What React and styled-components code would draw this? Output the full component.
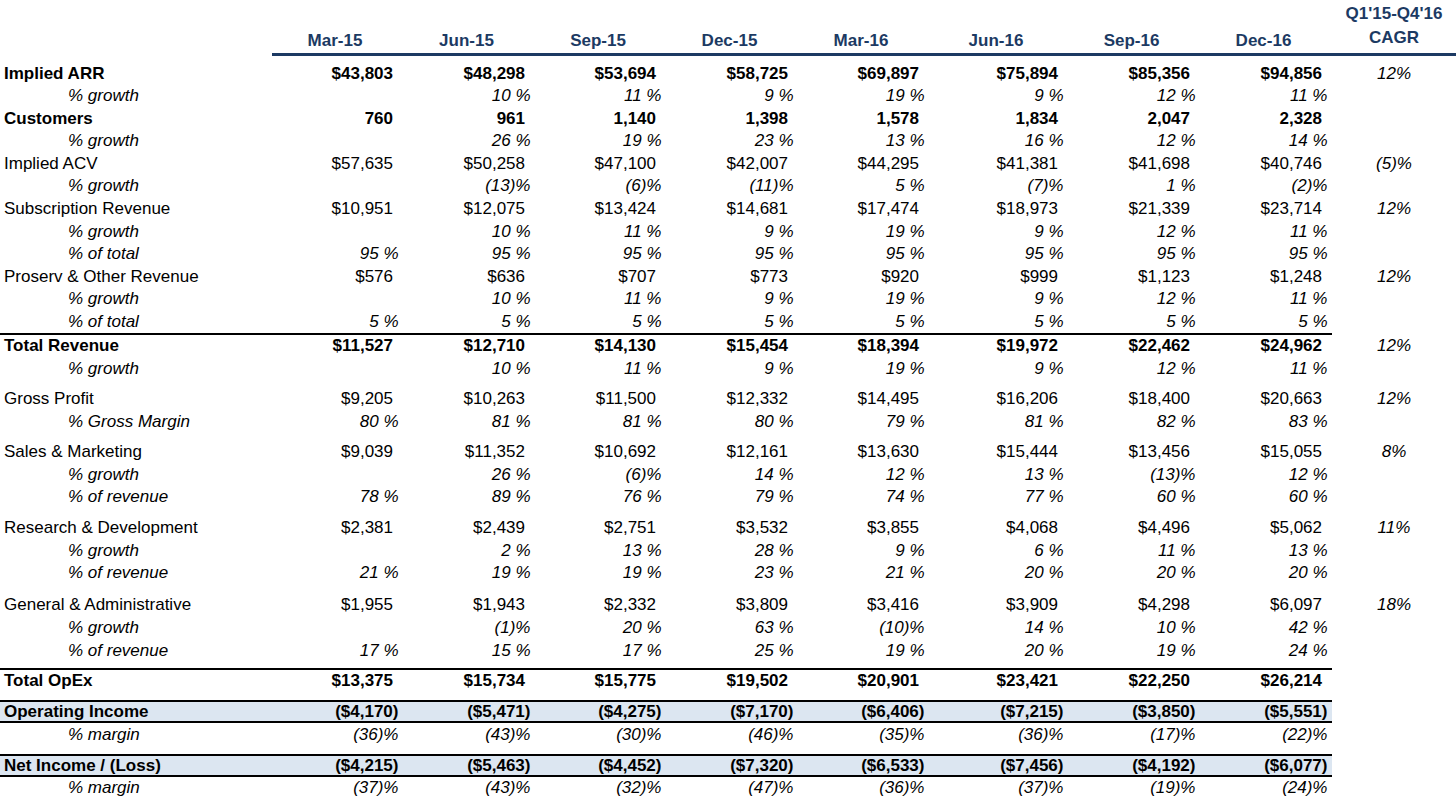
import React from 'react';
import styled, { createGlobalStyle } from 'styled-components';

const GlobalStyle = createGlobalStyle`
  body {
    margin: 0;
    background: #fff;
    font-family: "Liberation Sans", Arial, sans-serif;
    color: #000;
  }
`;

const COLS = '272px 131px 132px 131px 132px 131px 139px 132px 132px';
const NAVY = '#1c3a63';

const Sheet = styled.div`
  width: 1456px;
  font-size: 17px;
`;

const HeaderRow = styled.div`
  display: flex;
  height: 56px;
  margin-bottom: 6.7px;
`;

const HeaderBand = styled.div`
  margin-left: 272px;
  flex: 1;
  display: grid;
  grid-template-columns: 131px 132px 131px 132px 131px 139px 132px 132px 124px;
  align-items: end;
  border-bottom: 3px solid ${NAVY};
`;

const HeadCell = styled.div`
  color: ${NAVY};
  font-weight: bold;
  text-align: center;
  line-height: 24px;
  padding-right: ${(p) => (p.$cagr ? '0' : '5px')};
  position: relative;
  top: ${(p) => (p.$cagr ? '-3px' : '0')};
`;

const Row = styled.div`
  display: flex;
  margin-top: ${(p) => p.$gap || 0}px;
`;

const Main = styled.div`
  width: 1332px;
  display: grid;
  grid-template-columns: ${COLS};
  height: ${(p) => (p.$shaded ? '19px' : '22.55px')};
  line-height: ${(p) => (p.$shaded ? '19px' : '22.55px')};
  background: ${(p) => (p.$shaded ? '#dce6f1' : 'transparent')};
  border-top: ${(p) => (p.$line ? '2px solid #000' : 'none')};
  border-bottom: ${(p) => (p.$shaded ? '2px solid #000' : 'none')};
  font-weight: ${(p) => (p.$bold ? 'bold' : 'normal')};
  font-style: ${(p) => (p.$pct ? 'italic' : 'normal')};
  white-space: nowrap;
`;

const Label = styled.div`
  padding-left: ${(p) => (p.$indent ? '68px' : '4px')};
`;

const Value = styled.div`
  text-align: right;
  padding-right: ${(p) => p.$pad}px;
`;

const Cagr = styled.div`
  width: 124px;
  text-align: center;
  font-style: italic;
  line-height: 22.55px;
  padding-top: ${(p) => (p.$line ? '2px' : '0')};
`;

const rows = [
  { label: 'Implied ARR', type: 'bold', vals: ['$43,803', '$48,298', '$53,694', '$58,725', '$69,897', '$75,894', '$85,356', '$94,856'], cagr: '12%' },
  { label: '% growth', type: 'pct', vals: ['', '10 %', '11 %', '9 %', '19 %', '9 %', '12 %', '11 %'] },
  { label: 'Customers', type: 'bold', vals: ['760', '961', '1,140', '1,398', '1,578', '1,834', '2,047', '2,328'] },
  { label: '% growth', type: 'pct', vals: ['', '26 %', '19 %', '23 %', '13 %', '16 %', '12 %', '14 %'] },
  { label: 'Implied ACV', type: 'plain', vals: ['$57,635', '$50,258', '$47,100', '$42,007', '$44,295', '$41,381', '$41,698', '$40,746'], cagr: '(5)%' },
  { label: '% growth', type: 'pct', vals: ['', '(13)%', '(6)%', '(11)%', '5 %', '(7)%', '1 %', '(2)%'] },
  { label: 'Subscription Revenue', type: 'plain', vals: ['$10,951', '$12,075', '$13,424', '$14,681', '$17,474', '$18,973', '$21,339', '$23,714'], cagr: '12%' },
  { label: '% growth', type: 'pct', vals: ['', '10 %', '11 %', '9 %', '19 %', '9 %', '12 %', '11 %'] },
  { label: '% of total', type: 'pct', vals: ['95 %', '95 %', '95 %', '95 %', '95 %', '95 %', '95 %', '95 %'] },
  { label: 'Proserv & Other Revenue', type: 'plain', vals: ['$576', '$636', '$707', '$773', '$920', '$999', '$1,123', '$1,248'], cagr: '12%' },
  { label: '% growth', type: 'pct', vals: ['', '10 %', '11 %', '9 %', '19 %', '9 %', '12 %', '11 %'] },
  { label: '% of total', type: 'pct', vals: ['5 %', '5 %', '5 %', '5 %', '5 %', '5 %', '5 %', '5 %'] },
  { label: 'Total Revenue', type: 'bold', line: true, vals: ['$11,527', '$12,710', '$14,130', '$15,454', '$18,394', '$19,972', '$22,462', '$24,962'], cagr: '12%' },
  { label: '% growth', type: 'pct', vals: ['', '10 %', '11 %', '9 %', '19 %', '9 %', '12 %', '11 %'] },
  { label: 'Gross Profit', type: 'plain', gap: 7.7, vals: ['$9,205', '$10,263', '$11,500', '$12,332', '$14,495', '$16,206', '$18,400', '$20,663'], cagr: '12%' },
  { label: '% Gross Margin', type: 'pct', vals: ['80 %', '81 %', '81 %', '80 %', '79 %', '81 %', '82 %', '83 %'] },
  { label: 'Sales & Marketing', type: 'plain', gap: 8, vals: ['$9,039', '$11,352', '$10,692', '$12,161', '$13,630', '$15,444', '$13,456', '$15,055'], cagr: '8%' },
  { label: '% growth', type: 'pct', vals: ['', '26 %', '(6)%', '14 %', '12 %', '13 %', '(13)%', '12 %'] },
  { label: '% of revenue', type: 'pct', vals: ['78 %', '89 %', '76 %', '79 %', '74 %', '77 %', '60 %', '60 %'] },
  { label: 'Research & Development', type: 'plain', gap: 8.5, vals: ['$2,381', '$2,439', '$2,751', '$3,532', '$3,855', '$4,068', '$4,496', '$5,062'], cagr: '11%' },
  { label: '% growth', type: 'pct', vals: ['', '2 %', '13 %', '28 %', '9 %', '6 %', '11 %', '13 %'] },
  { label: '% of revenue', type: 'pct', vals: ['21 %', '19 %', '19 %', '23 %', '21 %', '20 %', '20 %', '20 %'] },
  { label: 'General & Administrative', type: 'plain', gap: 9.5, vals: ['$1,955', '$1,943', '$2,332', '$3,809', '$3,416', '$3,909', '$4,298', '$6,097'], cagr: '18%' },
  { label: '% growth', type: 'pct', vals: ['', '(1)%', '20 %', '63 %', '(10)%', '14 %', '10 %', '42 %'] },
  { label: '% of revenue', type: 'pct', vals: ['17 %', '15 %', '17 %', '25 %', '19 %', '20 %', '19 %', '24 %'] },
  { label: 'Total OpEx', type: 'bold', line: true, gap: 6, vals: ['$13,375', '$15,734', '$15,775', '$19,502', '$20,901', '$23,421', '$22,250', '$26,214'] },
  { label: 'Operating Income', type: 'bold', line: true, shaded: true, gap: 7.5, vals: ['($4,170)', '($5,471)', '($4,275)', '($7,170)', '($6,406)', '($7,215)', '($3,850)', '($5,551)'] },
  { label: '% margin', type: 'pct', gap: 1, vals: ['(36)%', '(43)%', '(30)%', '(46)%', '(35)%', '(36)%', '(17)%', '(22)%'] },
  { label: 'Net Income / (Loss)', type: 'bold', line: true, shaded: true, gap: 7, vals: ['($4,215)', '($5,463)', '($4,452)', '($7,320)', '($6,533)', '($7,456)', '($4,192)', '($6,077)'] },
  { label: '% margin', type: 'pct', vals: ['(37)%', '(43)%', '(32)%', '(47)%', '(36)%', '(37)%', '(19)%', '(24)%'] },
];

const months = ['Mar-15', 'Jun-15', 'Sep-15', 'Dec-15', 'Mar-16', 'Jun-16', 'Sep-16', 'Dec-16'];

// positive plain numbers leave room for a closing paren, like Excel's _)
const padFor = (v) => (/[)%]$/.test(v) ? 4.5 : 10);

export default function App() {
  return (
    <Sheet>
      <GlobalStyle />
      <HeaderRow>
        <HeaderBand>
          {months.map((m) => (
            <HeadCell key={m}>{m}</HeadCell>
          ))}
          <HeadCell $cagr>
            Q1'15-Q4'16
            <br />
            CAGR
          </HeadCell>
        </HeaderBand>
      </HeaderRow>
      {rows.map((r, i) => (
        <Row key={i} $gap={r.gap}>
          <Main
            $bold={r.type === 'bold'}
            $pct={r.type === 'pct'}
            $line={r.line}
            $shaded={r.shaded}
          >
            <Label $indent={r.type === 'pct'}>{r.label}</Label>
            {r.vals.map((v, j) => (
              <Value key={j} $pad={padFor(v)}>{v}</Value>
            ))}
          </Main>
          <Cagr $line={r.line}>{r.cagr || ''}</Cagr>
        </Row>
      ))}
    </Sheet>
  );
}
